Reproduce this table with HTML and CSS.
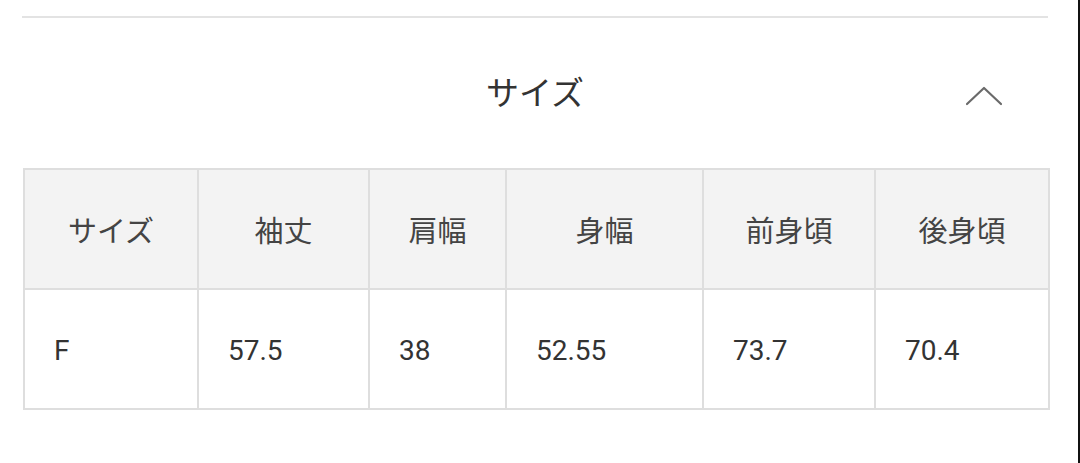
FILE: index.html
```html
<!DOCTYPE html>
<html lang="ja">
<head>
<meta charset="utf-8">
<link rel="stylesheet" href="styles.css">
</head>
<body>
<div class="page">
  <div class="content">
    <div class="rule"></div>
    <div class="section-head">
      <h2 class="title">サイズ</h2>
      <svg class="chevron" width="40" height="22" viewBox="0 0 40 22">
        <polyline points="2,18 19,2 36,18" fill="none" stroke="#6a6a6a" stroke-width="2.2" stroke-linecap="round" stroke-linejoin="round"/>
      </svg>
    </div>
    <table class="size-table">
      <colgroup>
        <col class="c1"><col class="c2"><col class="c3"><col class="c4"><col class="c5"><col class="c6">
      </colgroup>
      <thead>
        <tr>
          <th>サイズ</th><th>袖丈</th><th>肩幅</th><th>身幅</th><th>前身頃</th><th>後身頃</th>
        </tr>
      </thead>
      <tbody>
        <tr>
          <td>F</td><td>57.5</td><td>38</td><td>52.55</td><td>73.7</td><td>70.4</td>
        </tr>
      </tbody>
    </table>
  </div>
  <div class="edge"></div>
</div>
</body>
</html>
```

FILE: styles.css
```css
html, body {
  margin: 0;
  padding: 0;
  background: #ffffff;
}
body {
  width: 1080px;
  height: 463px;
  overflow: hidden;
  font-family: "Noto Sans CJK JP", "Noto Sans", sans-serif;
  color: #333;
}
.page {
  display: flex;
  height: 463px;
}
.content {
  flex: 1;
  min-width: 0;
  padding: 16px 30px 0 22px;
}
.edge {
  flex: 0 0 2px;
  width: 2px;
  background: #111;
}
.rule {
  height: 2px;
  background: #e3e3e3;
}
.section-head {
  height: 150px;
  display: flex;
  align-items: center;
  justify-content: center;
  position: relative;
}
.title {
  margin: 0 0 4px 0;
  font-size: 33px;
  font-weight: 400;
  color: #333;
  line-height: 1;
  letter-spacing: 0;
}
.chevron {
  position: absolute;
  right: 43px;
  top: 68px;
}
.size-table {
  margin-left: 1px;
  width: 1025px;
  border-collapse: collapse;
  table-layout: fixed;
  border: 2px solid #dedede;
}
.c1 { width: 174px; }
.c2 { width: 171px; }
.c3 { width: 137px; }
.c4 { width: 197px; }
.c5 { width: 172px; }
.c6 { width: 174px; }
.size-table th,
.size-table td {
  border: 2px solid #dedede;
  padding: 0;
}
.size-table th {
  height: 118px;
  background: #f3f3f3;
  font-weight: 400;
  font-size: 29px;
  color: #444;
  text-align: center;
  vertical-align: middle;
}
.size-table td {
  height: 116px;
  background: #fff;
  font-family: Roboto, "Noto Sans", sans-serif;
  font-size: 28px;
  color: #333;
  text-align: left;
  padding-left: 29px;
  padding-top: 2px;
  vertical-align: middle;
}
```
